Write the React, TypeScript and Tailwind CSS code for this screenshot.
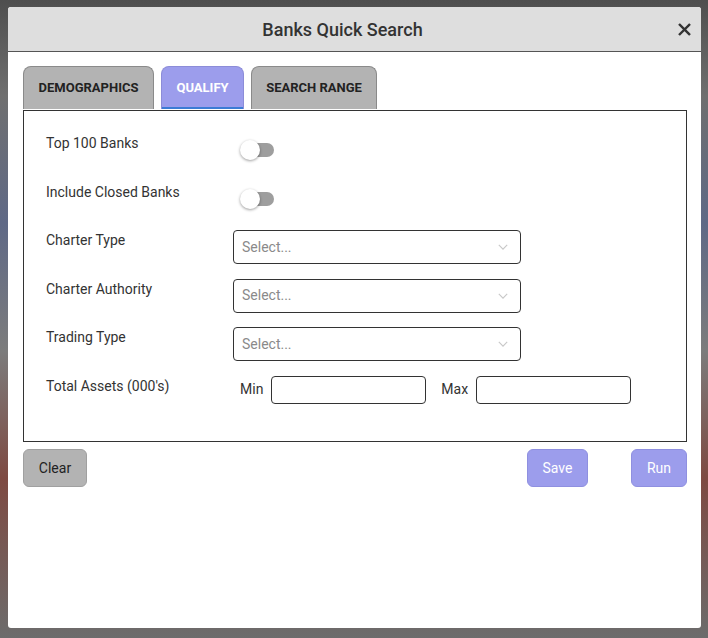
import React from 'react';

const font = { fontFamily: 'Roboto, "Noto Sans", sans-serif' };

const Toggle: React.FC = () => (
  <div className="relative h-[34px] w-[40px]">
    <div className="absolute left-[13px] top-[10px] h-[14px] w-[28px] rounded-full bg-[#9e9e9e]" />
    <div className="absolute left-[7px] top-[7px] h-[20px] w-[20px] rounded-full bg-white shadow-[0_1px_3px_rgba(0,0,0,0.4)]" />
  </div>
);

const SelectBox: React.FC = () => (
  <div className="flex h-[34px] w-[288px] items-center justify-between rounded-[4px] border border-[#333] pl-[8px] pr-[10px]">
    <span className="text-[14px] text-[#8a8a8a]">Select...</span>
    <svg width="14" height="14" viewBox="0 0 20 20" fill="none" stroke="#c8c8c8" strokeWidth="1.6">
      <path d="M4 7l6 6 6-6" />
    </svg>
  </div>
);

const Row: React.FC<{ label: string; children: React.ReactNode }> = ({ label, children }) => (
  <div className="flex h-[34px] items-start">
    <div className="w-[187px] text-[14px] leading-[20px] text-[#333]">{label}</div>
    {children}
  </div>
);

export default function App() {
  const tabs = [
    { name: 'DEMOGRAPHICS', w: 'w-[131px]', active: false },
    { name: 'QUALIFY', w: 'w-[83px]', active: true },
    { name: 'SEARCH RANGE', w: 'w-[126px]', active: false },
  ];

  return (
    <div
      style={font}
      className="h-[638px] w-[708px] overflow-hidden bg-[linear-gradient(180deg,#4e4e4e_0%,#6f6f6f_15%,#5f6986_35%,#7c7c7c_55%,#7e4a42_75%,#6c6c6c_100%)] pl-[8px] pt-[7px]"
    >
      <div className="flex h-[621px] w-[693px] flex-col overflow-hidden rounded-[3px] bg-white">
        <div className="flex h-[45px] items-center border-b border-[#555] bg-[#dedede]">
          <div className="flex-1 pl-[6px] text-center text-[18px] font-medium text-[#333]">Banks Quick Search</div>
          <button className="flex w-[30px] items-center justify-center pr-[4px] text-[#333]">
            <svg width="13" height="13" viewBox="0 0 14 14" stroke="#333" strokeWidth="2.6" strokeLinecap="square">
              <path d="M2 2l10 10M12 2L2 12" />
            </svg>
          </button>
        </div>

        <div className="pl-[15px] pr-[14px] pt-[14px]">
          <div className="flex gap-[7px]">
            {tabs.map((t) =>
              t.active ? (
                <div
                  key={t.name}
                  className={`${t.w} flex h-[43px] items-center justify-center rounded-t-[8px] border border-b-0 border-[#8c8cd8] bg-[#9c9dec] text-[13px] font-bold text-white shadow-[inset_0_-2px_0_#3b7bd5]`}
                >
                  {t.name}
                </div>
              ) : (
                <div
                  key={t.name}
                  className={`${t.w} flex h-[43px] items-center justify-center rounded-t-[8px] border border-b-0 border-[#8a8a8a] bg-[#b3b3b3] text-[13px] font-bold text-[#222]`}
                >
                  {t.name}
                </div>
              )
            )}
          </div>

          <div className="mt-[1px] flex h-[332px] flex-col gap-[14.6px] border border-[#333] px-[22px] pt-[22px]">
            <Row label="Top 100 Banks">
              <Toggle />
            </Row>
            <Row label="Include Closed Banks">
              <Toggle />
            </Row>
            <Row label="Charter Type">
              <SelectBox />
            </Row>
            <Row label="Charter Authority">
              <SelectBox />
            </Row>
            <Row label="Trading Type">
              <SelectBox />
            </Row>
            <Row label="Total Assets (000's)">
              <div className="flex h-[28px] items-center text-[14px] text-[#333]">
                <span className="ml-[7px] mr-[8px]">Min</span>
                <div className="h-[28px] w-[155px] rounded-[4px] border border-[#333]" />
                <span className="ml-[15px] mr-[8px]">Max</span>
                <div className="h-[28px] w-[155px] rounded-[4px] border border-[#333]" />
              </div>
            </Row>
          </div>

          <div className="mt-[7px] flex items-center">
            <button className="h-[38px] w-[64px] rounded-[6px] border border-[#a0a0a0] bg-[#b3b3b3] text-[14px] text-[#222]">
              Clear
            </button>
            <div className="flex-1" />
            <button className="h-[38px] w-[61px] rounded-[6px] border border-[#8f90e0] bg-[#9c9dec] text-[14px] text-white">
              Save
            </button>
            <button className="ml-[43px] h-[38px] w-[56px] rounded-[6px] border border-[#8f90e0] bg-[#9c9dec] text-[14px] text-white">
              Run
            </button>
          </div>
        </div>
      </div>
    </div>
  );
}
